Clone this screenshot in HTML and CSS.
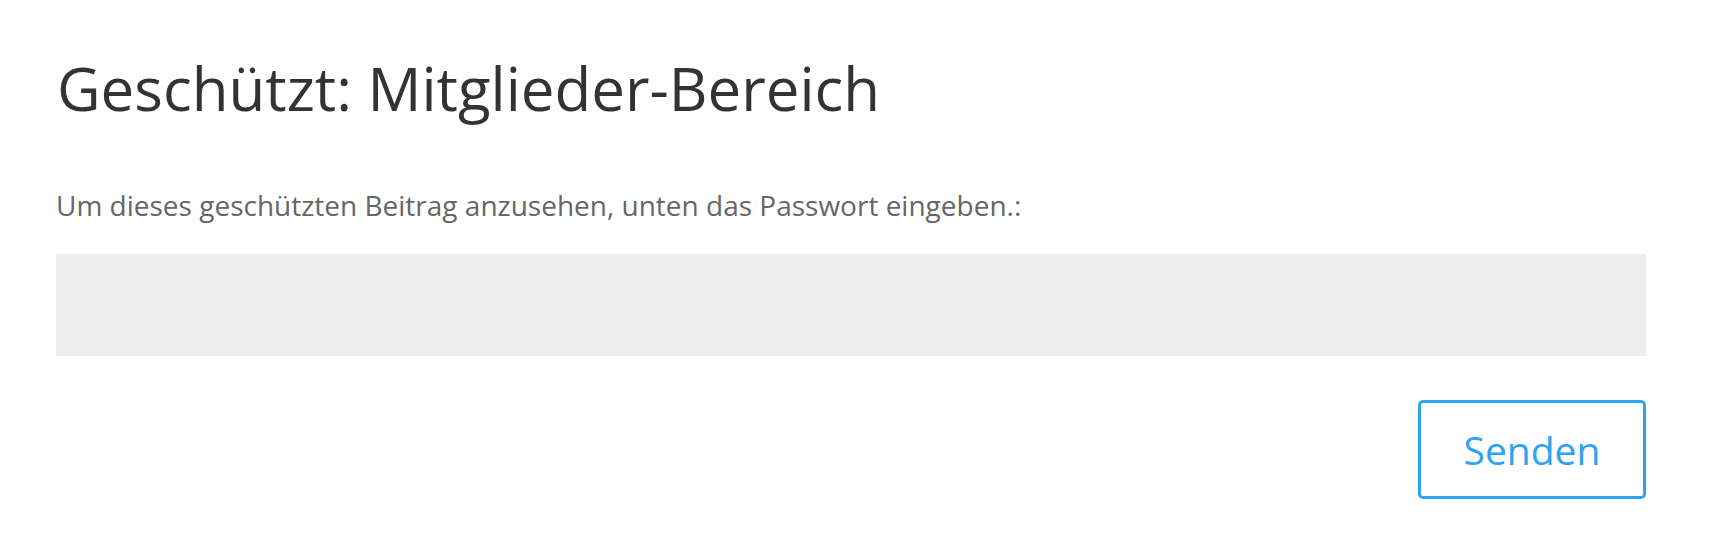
FILE: index.html
```html
<!DOCTYPE html>
<html lang="de">
<head>
<meta charset="utf-8">
<title>Geschützt: Mitglieder-Bereich</title>
<link rel="stylesheet" href="styles.css">
</head>
<body>
<main class="page">
  <h1 class="title">Geschützt: Mitglieder-Bereich</h1>
  <form class="pw-form">
    <p class="hint">Um dieses geschützten Beitrag anzusehen, unten das Passwort eingeben.:</p>
    <input class="pw-input" type="password" aria-label="Passwort">
    <div class="actions">
      <button class="btn" type="button">Senden</button>
    </div>
  </form>
</main>
</body>
</html>
```

FILE: styles.css
```css
html, body {
  margin: 0;
  padding: 0;
  background: #fff;
}
body {
  font-family: "Open Sans", "Liberation Sans", sans-serif;
}
.page {
  width: 1590px;
  padding: 58px 0 0 56px;
}
.title {
  margin: 0;
  font-size: 60px;
  line-height: 1;
  font-weight: 400;
  color: #333;
  padding-left: 1px;
}
.pw-form {
  margin: 0;
  padding-top: 73px;
  display: flex;
  flex-direction: column;
}
.hint {
  margin: 0;
  font-size: 28px;
  line-height: 1;
  color: #666;
}
.pw-input {
  margin-top: 35px;
  height: 102px;
  box-sizing: border-box;
  border: 0;
  background: #eee;
  padding: 0 20px;
  font: inherit;
  outline: none;
}
.actions {
  display: flex;
  justify-content: flex-end;
  padding-top: 44px;
}
.btn {
  width: 228px;
  height: 99px;
  box-sizing: border-box;
  border: 3px solid #2ea3f2;
  border-radius: 5px;
  background: #fff;
  color: #2ea3f2;
  font-family: "Open Sans", "Liberation Sans", sans-serif;
  font-size: 39px;
  line-height: 1;
  padding: 0;
  display: flex;
  align-items: center;
  justify-content: center;
}
```
